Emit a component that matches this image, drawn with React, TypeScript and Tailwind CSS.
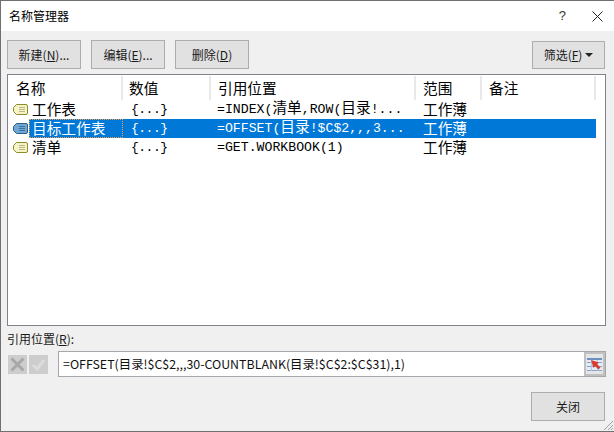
const cjk = "font-['Noto_Sans_CJK_SC',sans-serif]";
const gridCols = "grid grid-cols-[115px_88px_205px_66px_114px]";

const filas = [
  { nombre: "工作表", ref: ["=INDEX(", "清单", ",ROW(", "目录", "!..."], selected: false },
  { nombre: "目标工作表", ref: ["=OFFSET(", "目录", "!$C$2,,,3..."], selected: true },
  { nombre: "清单", ref: ["=GET.WORKBOOK(1)"], selected: false },
];

const columnas = [
  { titulo: "名称", pad: "pl-2" },
  { titulo: "数值", pad: "pl-[6px]" },
  { titulo: "引用位置", pad: "pl-[7px]" },
  { titulo: "范围", pad: "pl-[7px]" },
  { titulo: "备注", pad: "pl-[7px]" },
];

function TagIcon({ selected }: { selected: boolean }) {
  const fill = selected ? "#6fa8d6" : "#f6f3c4";
  const stroke = selected ? "#2f5f86" : "#8c8c2a";
  return (
    <svg width="15" height="11" viewBox="0 0 15 11" className="shrink-0">
      <path d="M3.5 .5H13a1.5 1.5 0 0 1 1.5 1.5v7A1.5 1.5 0 0 1 13 10.5H3.5L.5 7.5v-4z" fill={fill} stroke={stroke} />
      <path d="M6 3.5h6M6 5.5h6M6 7.5h6" stroke={selected ? "#3f7299" : "#b8b88a"} />
    </svg>
  );
}

function Boton({ children, className }: { children: React.ReactNode; className: string }) {
  return (
    <div className={`flex items-center justify-center border border-[#adadad] bg-[#e1e1e1] text-[12px] text-[#1a1a1a] ${className}`}>
      {children}
    </div>
  );
}

function RefIcon() {
  return (
    <svg width="15" height="13" viewBox="0 0 15 13" className="shrink-0">
      <rect x="0" y="0" width="15" height="13" fill="#e4ecf6" />
      <rect x="0" y="0" width="15" height="2" fill="#6b90c4" />
      <path d="M0 4.5h15M0 8.5h15M0 12.5h15" stroke="#86a3cd" />
      <path d="M4.5 2v11M10.5 2v11" stroke="#b4c6df" />
      <path d="M4 2l8 2.5-2 1.5 3.5 3.5-2 2L8 8l-1.5 2z" fill="#dc3a2e" />
    </svg>
  );
}

export default function App() {
  return (
    <div className={`relative flex h-[432px] w-[614px] flex-col border-t border-l border-b border-[#707070] bg-[#f0f0f0] ${cjk}`}>
      <div className="flex h-[30px] shrink-0 items-center justify-between bg-white pr-[11px] pl-2">
        <span className="text-[12px] text-black">名称管理器</span>
        <div className="flex items-center gap-[26px]">
          <span className="font-['Liberation_Sans',sans-serif] text-[13px] text-[#333]">?</span>
          <svg width="11" height="11" viewBox="0 0 11 11">
            <path d="M.5.5l10 10M10.5.5l-10 10" stroke="#222" strokeWidth="1" />
          </svg>
        </div>
      </div>

      <div className="flex items-center justify-between pt-[9px] pr-[9px] pl-[6px]">
        <div className="flex gap-[10px]">
          <Boton className="h-[29px] w-[74px]">新建(<u>N</u>)...</Boton>
          <Boton className="h-[29px] w-[74px]">编辑(<u>E</u>)...</Boton>
          <Boton className="h-[29px] w-[74px]">删除(<u>D</u>)</Boton>
        </div>
        <Boton className="mt-px h-[28px] w-[73px] gap-[3px]">
          <span>筛选(<u>F</u>)</span>
          <span className="h-0 w-0 border-x-[4px] border-t-[4px] border-x-transparent border-t-[#222]" />
        </Boton>
      </div>

      <div className="mt-[5px] mr-2 ml-[6px] h-[252px] border border-[#82828c] bg-white pt-px text-[14.67px] text-black">
        <div className={`${gridCols} h-[24px] items-center`}>
          {columnas.map((col) => (
            <div key={col.titulo} className={`flex h-full items-center border-r-2 border-[#e8e8e8] leading-none ${col.pad}`}>
              {col.titulo}
            </div>
          ))}
        </div>
        <div>
          {filas.map((fila) => (
            <div key={fila.nombre} className={`${gridCols} h-[19px] items-center leading-none`}>
              <div className="flex h-[19px] items-center gap-px pl-[5px]">
                <TagIcon selected={fila.selected} />
                <span className={fila.selected ? "flex h-[19px] flex-1 items-center bg-[#0078d7] pl-[3px] text-white outline-1 -outline-offset-1 outline-dotted outline-[#f0a050]" : "pl-[3px]"}>
                  {fila.nombre}
                </span>
              </div>
              <div className={`flex h-[19px] items-center pl-2 font-['Liberation_Mono','Noto_Sans_CJK_SC',monospace] text-[13px] tracking-[-0.5px] ${fila.selected ? "bg-[#0078d7] text-white" : ""}`}>
                {"{...}"}
              </div>
              <div className={`flex h-[19px] items-center pl-[6px] font-['Liberation_Mono','Noto_Sans_CJK_SC',monospace] text-[13.2px] whitespace-nowrap ${fila.selected ? "bg-[#0078d7] text-white" : ""}`}>
                {fila.ref.map((parte, i) =>
                  /[\u4e00-\u9fff]/.test(parte) ? (
                    <span key={i} className="text-[14.67px]">{parte}</span>
                  ) : (
                    <span key={i}>{parte}</span>
                  ),
                )}
              </div>
              <div className={`flex h-[19px] items-center pl-[7px] ${fila.selected ? "bg-[#0078d7] text-white" : ""}`}>工作薄</div>
              <div className={`h-[19px] ${fila.selected ? "bg-[#0078d7]" : ""}`} />
            </div>
          ))}
        </div>
      </div>

      <div className="mt-[4px] pl-[6px] text-[12px] leading-[18px] text-[#1a1a1a]">
        引用位置(<u>R</u>):
      </div>

      <div className="mt-[3px] flex items-center pr-2 pl-[7px]">
        <div className="flex gap-[2px]">
          <div className="flex h-[19px] w-[19px] items-center justify-center bg-[#cdcdcd]">
            <svg width="15" height="15" viewBox="0 0 15 15">
              <path d="M1.5 1.5l12 12M13.5 1.5l-12 12" stroke="#a8a8a8" strokeWidth="3" />
            </svg>
          </div>
          <div className="flex h-[19px] w-[19px] items-center justify-center bg-[#cdcdcd]">
            <svg width="15" height="15" viewBox="0 0 15 15">
              <path d="M2 8l4 4 7-9" fill="none" stroke="#dcdcdc" strokeWidth="3" />
            </svg>
          </div>
        </div>
        <div className="ml-[10px] flex h-[26px] flex-1 items-center border border-[#a6a6ad] bg-white">
          <span className="flex-1 pl-1 text-[12.4px] whitespace-nowrap text-[#111]">
            =OFFSET(目录!$C$2,,,30-COUNTBLANK(目录!$C$2:$C$31),1)
          </span>
          <div className="flex h-full w-[21px] shrink-0 items-center justify-center border-2 border-[#c0c0c0] bg-[#e6e6e6]">
            <RefIcon />
          </div>
        </div>
      </div>

      <div className="mt-[15px] flex justify-end pr-[9px]">
        <Boton className="h-[29px] w-[74px]">关闭</Boton>
      </div>

      <svg width="12" height="12" viewBox="0 0 12 12" className="absolute right-0 bottom-0">
        <path d="M11 2L2 11M11 6l-5 5M11 9l-2 2" stroke="#a0a0a0" />
      </svg>
    </div>
  );
}
